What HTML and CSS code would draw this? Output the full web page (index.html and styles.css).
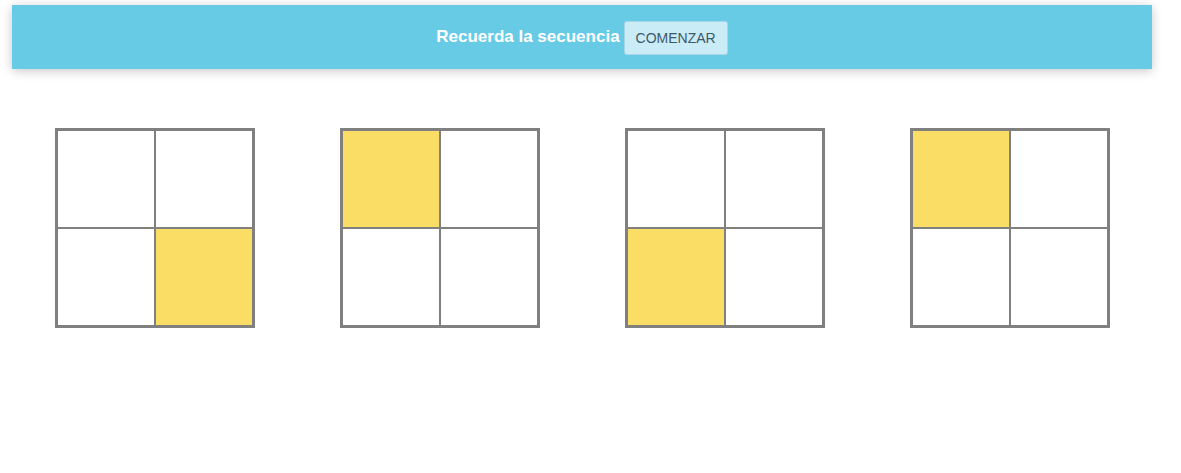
FILE: index.html
```html
<!DOCTYPE html>
<html lang="es">
<head>
<meta charset="utf-8">
<title>Recuerda la secuencia</title>
<link rel="stylesheet" href="styles.css">
</head>
<body>
<div class="page">
  <header class="topbar">
    <span class="title">Recuerda la secuencia</span>
    <button class="btn">COMENZAR</button>
  </header>
  <main class="boards">
    <div class="col">
      <div class="grid">
        <div class="cell"></div><div class="cell"></div>
        <div class="cell"></div><div class="cell on"></div>
      </div>
    </div>
    <div class="col">
      <div class="grid">
        <div class="cell on"></div><div class="cell"></div>
        <div class="cell"></div><div class="cell"></div>
      </div>
    </div>
    <div class="col">
      <div class="grid">
        <div class="cell"></div><div class="cell"></div>
        <div class="cell on"></div><div class="cell"></div>
      </div>
    </div>
    <div class="col">
      <div class="grid">
        <div class="cell on"></div><div class="cell"></div>
        <div class="cell"></div><div class="cell"></div>
      </div>
    </div>
  </main>
</div>
</body>
</html>
```
FILE: styles.css
```css
* { box-sizing: border-box; }
html, body { margin: 0; padding: 0; background: #fff; }
body { font-family: "Liberation Sans", Arial, sans-serif; }

.page {
  width: 1140px;
  margin-left: 12px;
  padding-top: 5px;
}

.topbar {
  height: 64px;
  background: #68cbe6;
  box-shadow: 0 2px 10px rgba(0, 0, 0, 0.22);
  display: flex;
  align-items: center;
  justify-content: center;
  gap: 4px;
}

.title {
  color: #fff;
  font-weight: bold;
  font-size: 17px;
}

.btn {
  height: 34px;
  padding: 0 11px;
  background: #c9ecf7;
  border: 1px solid #a9d6e5;
  border-radius: 3px;
  color: #3f5868;
  font-family: "Liberation Sans", Arial, sans-serif;
  font-size: 14px;
  margin-top: 1px;
}

.boards {
  display: grid;
  grid-template-columns: repeat(4, 1fr);
  padding-top: 59px;
}

.col {
  display: flex;
  justify-content: center;
}

.grid {
  width: 200px;
  height: 200px;
  border: 2px solid #808080;
  display: grid;
  grid-template-columns: 1fr 1fr;
  grid-template-rows: 1fr 1fr;
}

.cell {
  border: 1px solid #808080;
  background: #fff;
}

.cell.on { background: #fadd64; }
```
